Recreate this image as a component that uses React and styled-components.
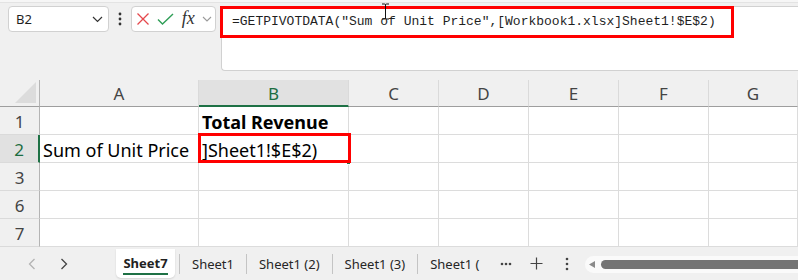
import React from 'react';
import styled, { createGlobalStyle } from 'styled-components';

const Global = createGlobalStyle`
  html, body { margin: 0; padding: 0; }
  body {
    background: #f0f0f0;
    font-family: "Noto Sans", "Open Sans", sans-serif;
    overflow: hidden;
  }
  * { box-sizing: border-box; }
`;

const Page = styled.div`
  width: 798px;
  height: 280px;
  display: flex;
  flex-direction: column;
  overflow: hidden;
  background: #f0f0f0;
  position: relative;
`;

const TopEdge = styled.div`
  height: 3px;
  background: #f6f6f6;
  border-bottom: 1px solid #e3e3e3;
`;

const TopBar = styled.div`
  height: 77px;
  display: flex;
  align-items: flex-start;
  padding: 3px 0 0 8px;
`;

const Field = styled.div`
  height: 26px;
  background: #fff;
  border: 1px solid #d1d1d1;
  border-radius: 4px;
  display: flex;
  align-items: center;
`;

const NameBox = styled(Field)`
  width: 101px;
  justify-content: space-between;
  padding: 0 5px 0 7px;
  font-size: 13px;
  color: #1f1f1f;
`;

const DotsCol = styled.div`
  width: 22px;
  height: 26px;
  display: flex;
  align-items: center;
  justify-content: center;
`;

const FxBox = styled(Field)`
  width: 85px;
  padding: 0 3px 0 4px;
  justify-content: space-between;
`;

const FxText = styled.span`
  font-family: "Liberation Serif", "DejaVu Serif", serif;
  font-style: italic;
  font-size: 18px;
  color: #333;
  line-height: 1;
  margin-top: -2px;
`;

const FormulaBox = styled.div`
  flex: 1;
  margin-left: 5px;
  height: 65px;
  background: #fff;
  border: 1px solid #d1d1d1;
  border-right: none;
  border-radius: 4px 0 0 4px;
  position: relative;
`;

const FormulaText = styled.div`
  height: 29px;
  display: flex;
  align-items: center;
  padding-left: 10px;
  font-family: "Liberation Mono", "DejaVu Sans Mono", monospace;
  font-size: 13px;
  color: #1f1f1f;
  white-space: pre;
`;

const Highlight = styled.div`
  position: absolute;
  left: ${p => p.$left}px;
  top: ${p => p.$top}px;
  width: ${p => p.$w}px;
  height: ${p => p.$h}px;
  border: 3px solid #ff0000;
  pointer-events: none;
  z-index: 3;
`;

const Cursor = styled.svg`
  position: absolute;
  left: 381px;
  top: 3px;
  z-index: 4;
`;

const Grid = styled.div`
  display: grid;
  grid-template-columns: 40px 159px 150px 90px 90px 90px 90px 89px;
  grid-template-rows: 27px repeat(5, 28px);
  background: #fff;
`;

const Corner = styled.div`
  background: #f0f0f0;
  border-right: 1px solid #b4b4b4;
  border-bottom: 1px solid #9e9e9e;
  position: relative;
  display: flex;
  align-items: flex-end;
  justify-content: flex-end;
  padding: 0 3px 3px 0;
`;

const ColHead = styled.div`
  background: ${p => (p.$active ? '#e1e1e1' : '#f0f0f0')};
  color: ${p => (p.$active ? '#1c6e42' : '#444')};
  border-right: 1px solid #dadada;
  border-bottom: ${p => (p.$active ? '2px solid #1e7145' : '1px solid #9e9e9e')};
  display: flex;
  align-items: center;
  justify-content: center;
  font-size: 17px;
  padding-top: 1px;
`;

const RowHead = styled.div`
  background: ${p => (p.$active ? '#e1e1e1' : '#f0f0f0')};
  color: ${p => (p.$active ? '#1c6e42' : '#444')};
  border-right: ${p => (p.$active ? '2px solid #1e7145' : '1px solid #b4b4b4')};
  border-bottom: 1px solid #dadada;
  display: flex;
  align-items: center;
  justify-content: center;
  font-size: 17px;
  padding-top: 2px;
`;

const Cell = styled.div`
  border-right: 1px solid #dcdcdc;
  border-bottom: 1px solid #dcdcdc;
  display: flex;
  align-items: center;
  padding: 3px 3px 0 3px;
  font-size: 18px;
  font-weight: ${p => (p.$bold ? 700 : 400)};
  color: #000;
  white-space: nowrap;
  overflow: visible;
  position: relative;
`;

const FillHandle = styled.div`
  position: absolute;
  right: -3px;
  bottom: -3px;
  width: 5px;
  height: 5px;
  background: #1e7145;
  border: 1px solid #fff;
  z-index: 2;
`;

const TabBar = styled.div`
  height: 33px;
  display: flex;
  align-items: center;
  background: #f0f0f0;
`;

const Nav = styled.div`
  width: 116px;
  display: flex;
  align-items: center;
  padding-left: 28px;
  gap: 24px;
`;

const ActiveTab = styled.div`
  width: 59px;
  height: 29px;
  align-self: flex-start;
  margin-top: 2px;
  background: #fff;
  border-radius: 0 0 5px 5px;
  box-shadow: 0 1px 2px rgba(0, 0, 0, 0.12);
  display: flex;
  flex-direction: column;
  align-items: center;
  justify-content: center;
  font-size: 13px;
  font-weight: 700;
  color: #222;
`;

const TabLabel = styled.span`
  border-bottom: 2px solid #1e7145;
  padding-bottom: 1px;
  margin-top: 2px;
  line-height: 17px;
`;

const Sep = styled.div`
  width: 1px;
  height: 20px;
  background: #c4c4c4;
  margin-left: ${p => p.$ml || 0}px;
`;

const Tab = styled.div`
  padding: 0 12px;
  font-size: 13px;
  color: #262626;
  white-space: nowrap;
`;

const IconBtn = styled.div`
  width: ${p => p.$w}px;
  display: flex;
  align-items: center;
  justify-content: center;
  color: #444;
`;

const ScrollTrack = styled.div`
  flex: 1;
  height: 17px;
  margin-left: 3px;
  margin-top: 2px;
  background: #fafafa;
  border-radius: 9px 0 0 9px;
  display: flex;
  align-items: center;
  padding-left: 4px;
  gap: 6px;
`;

const Thumb = styled.div`
  flex: 1;
  height: 9px;
  background: #747474;
  border-radius: 5px 0 0 5px;
`;

const cols = ['A', 'B', 'C', 'D', 'E', 'F', 'G'];
const rows = [
  { n: '1', cells: ['', 'Total Revenue'] },
  { n: '2', cells: ['Sum of Unit Price', ']Sheet1!$E$2)'], active: true },
  { n: '3', cells: [] },
  { n: '6', cells: [] },
  { n: '7', cells: [] },
];

export default function App() {
  return (
    <Page>
      <Global />
      <TopEdge />
      <TopBar>
        <NameBox>
          <span>B2</span>
          <svg width="11" height="7" viewBox="0 0 11 7">
            <path d="M1 1 L5.5 5.5 L10 1" fill="none" stroke="#333" strokeWidth="1.2" />
          </svg>
        </NameBox>
        <DotsCol>
          <svg width="4" height="14" viewBox="0 0 4 14">
            <circle cx="2" cy="2" r="1.4" fill="#333" />
            <circle cx="2" cy="7" r="1.4" fill="#333" />
            <circle cx="2" cy="12" r="1.4" fill="#333" />
          </svg>
        </DotsCol>
        <FxBox>
          <svg width="14" height="14" viewBox="0 0 14 14">
            <path d="M1.5 1.5 L12.5 12.5 M12.5 1.5 L1.5 12.5" stroke="#e5484d" strokeWidth="1.3" fill="none" />
          </svg>
          <svg width="17" height="13" viewBox="0 0 17 13">
            <path d="M1 6.5 L5.5 11 L16 1" stroke="#2f9e57" strokeWidth="1.4" fill="none" />
          </svg>
          <FxText>fx</FxText>
          <svg width="10" height="6" viewBox="0 0 10 6">
            <path d="M1 1 L5 5 L9 1" fill="none" stroke="#9a9a9a" strokeWidth="1.1" />
          </svg>
        </FxBox>
        <FormulaBox>
          <FormulaText>=GETPIVOTDATA("Sum of Unit Price",[Workbook1.xlsx]Sheet1!$E$2)</FormulaText>
          <Highlight $left={-2} $top={-1} $w={514} $h={32} />
        </FormulaBox>
      </TopBar>
      <Cursor width="9" height="17" viewBox="0 0 9 17">
        <path d="M1 1 H3.5 Q4.5 1 4.5 2 V15 Q4.5 16 3.5 16 H1 M8 1 H5.5 Q4.5 1 4.5 2 M4.5 15 Q4.5 16 5.5 16 H8" fill="none" stroke="#111" strokeWidth="1" />
      </Cursor>
      <Grid>
        <Corner>
          <svg width="21" height="21" viewBox="0 0 21 21">
            <path d="M21 0 L21 21 L0 21 Z" fill="#dcdcdc" />
          </svg>
        </Corner>
        {cols.map(c => (
          <ColHead key={c} $active={c === 'B'}>{c}</ColHead>
        ))}
        {rows.map(r => (
          <React.Fragment key={r.n}>
            <RowHead $active={r.active}>{r.n}</RowHead>
            {cols.map((c, i) => (
              <Cell key={c} $bold={r.n === '1' && i === 1}>
                {r.cells[i] || ''}
                {r.active && i === 1 && (
                  <>
                    <FillHandle />
                    <Highlight $left={-1} $top={-2} $w={153} $h={30} />
                  </>
                )}
              </Cell>
            ))}
          </React.Fragment>
        ))}
      </Grid>
      <TabBar>
        <Nav>
          <svg width="8" height="12" viewBox="0 0 8 12">
            <path d="M6.5 1 L1.5 6 L6.5 11" fill="none" stroke="#b3b3b3" strokeWidth="1.3" />
          </svg>
          <svg width="8" height="12" viewBox="0 0 8 12">
            <path d="M1.5 1 L6.5 6 L1.5 11" fill="none" stroke="#444" strokeWidth="1.3" />
          </svg>
        </Nav>
        <ActiveTab>
          <TabLabel>Sheet7</TabLabel>
        </ActiveTab>
        <Sep $ml={4} />
        <Tab>Sheet1</Tab>
        <Sep />
        <Tab>Sheet1 (2)</Tab>
        <Sep />
        <Tab>Sheet1 (3)</Tab>
        <Sep />
        <Tab>Sheet1 (</Tab>
        <IconBtn $w={30}>
          <svg width="12" height="4" viewBox="0 0 12 4">
            <circle cx="2" cy="2" r="1.3" fill="#444" />
            <circle cx="6" cy="2" r="1.3" fill="#444" />
            <circle cx="10" cy="2" r="1.3" fill="#444" />
          </svg>
        </IconBtn>
        <IconBtn $w={30}>
          <svg width="13" height="13" viewBox="0 0 13 13">
            <path d="M6.5 0.5 V12.5 M0.5 6.5 H12.5" stroke="#444" strokeWidth="1.2" fill="none" />
          </svg>
        </IconBtn>
        <IconBtn $w={31}>
          <svg width="4" height="14" viewBox="0 0 4 14">
            <circle cx="2" cy="2" r="1.3" fill="#444" />
            <circle cx="2" cy="7" r="1.3" fill="#444" />
            <circle cx="2" cy="12" r="1.3" fill="#444" />
          </svg>
        </IconBtn>
        <ScrollTrack>
          <svg width="6" height="7" viewBox="0 0 6 7">
            <path d="M6 0 L6 7 L0 3.5 Z" fill="#8a8a8a" />
          </svg>
          <Thumb />
        </ScrollTrack>
      </TabBar>
    </Page>
  );
}
